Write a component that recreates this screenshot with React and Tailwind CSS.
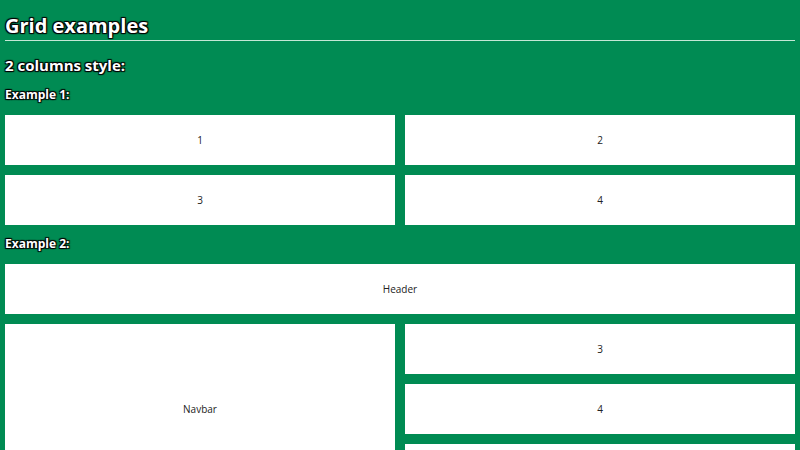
const Cell = ({ children, className = '' }) => (
  <div className={`flex items-center justify-center bg-white text-[10px] text-[#222] ${className}`}>
    {children}
  </div>
);

// white bold text with a thin dark outline
const heading =
  "font-bold text-white [text-shadow:1px_1px_1px_#000,-1px_-1px_1px_#000,1px_-1px_1px_#000,-1px_1px_1px_#000]";

export default function App() {
  return (
    <div className="min-h-screen bg-[#008b53] p-[5px] font-['Open_Sans',sans-serif]">
      <h1 className={`pt-[7px] text-[20px] leading-[28px] border-b border-[#c4e8d6] ${heading}`}>
        Grid examples
      </h1>

      <h2 className={`mt-[14px] text-[15px] leading-[20px] ${heading}`}>2 columns style:</h2>

      <h3 className={`mt-[11px] text-[12px] leading-[18px] ${heading}`}>Example 1:</h3>
      <div className="mt-[11px] grid grid-cols-2 gap-[10px]">
        <Cell className="h-[50px]">1</Cell>
        <Cell className="h-[50px]">2</Cell>
        <Cell className="h-[50px]">3</Cell>
        <Cell className="h-[50px]">4</Cell>
      </div>

      <h3 className={`mt-[10px] text-[12px] leading-[18px] ${heading}`}>Example 2:</h3>
      <div className="mt-[11px] grid grid-cols-2 auto-rows-[50px] gap-[10px]">
        <Cell className="col-span-2">Header</Cell>
        <Cell className="row-span-3">Navbar</Cell>
        <Cell>3</Cell>
        <Cell>4</Cell>
        <Cell>5</Cell>
      </div>
    </div>
  );
}
